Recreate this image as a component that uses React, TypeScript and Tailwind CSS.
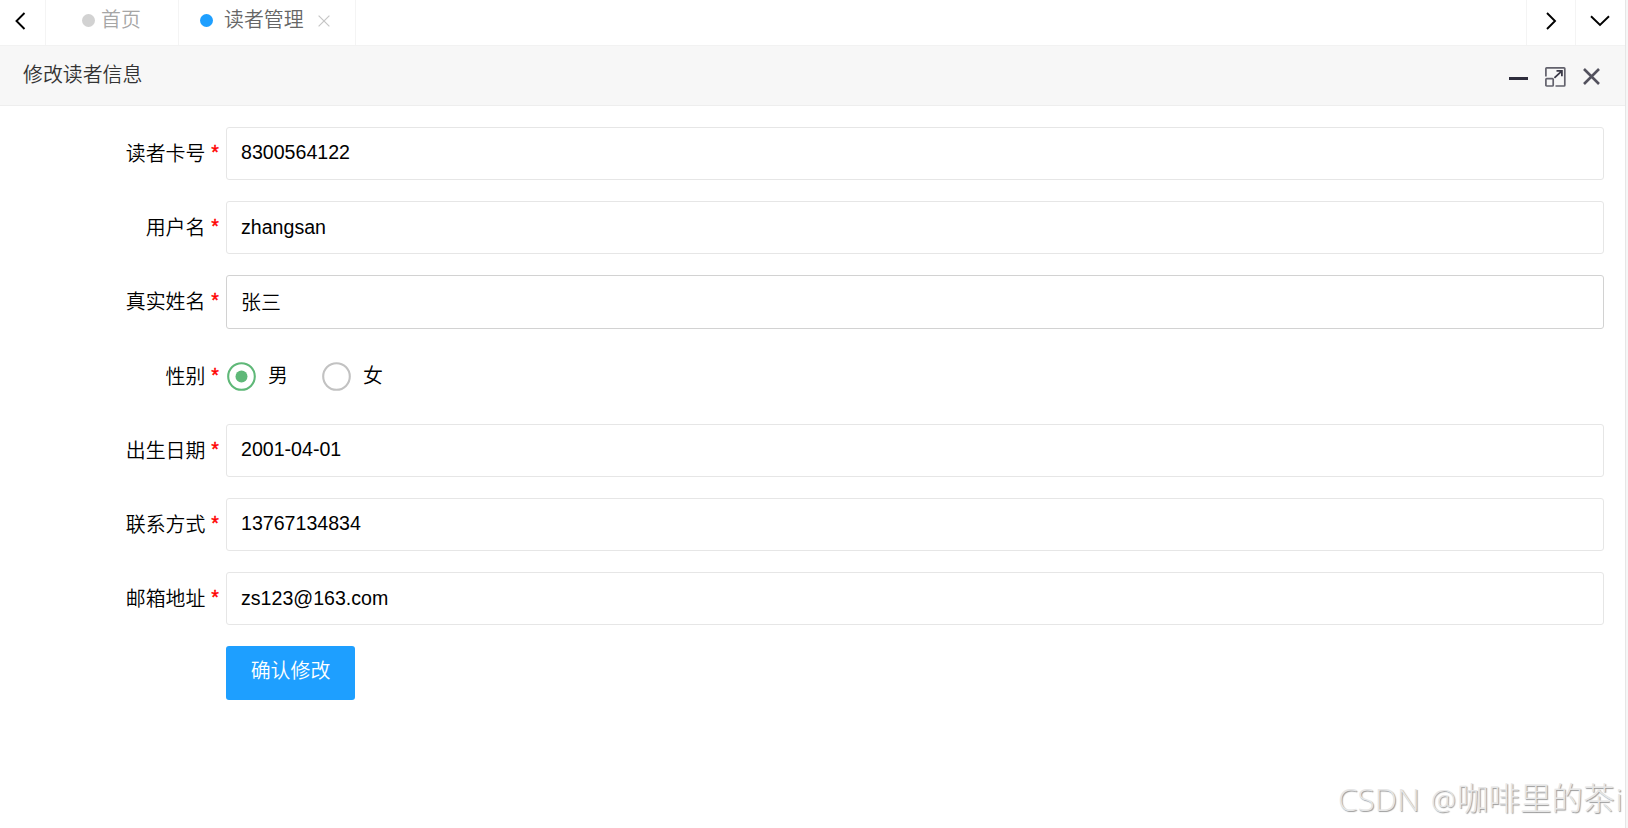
import { useState } from "react";
import type { ReactNode } from "react";

const fields = [
  { label: "读者卡号", name: "readerNumber", value: "8300564122" },
  { label: "用户名", name: "username", value: "zhangsan" },
  { label: "真实姓名", name: "realName", value: "张三", hover: true },
  { label: "性别", name: "sex", value: "男", options: ["男", "女"] },
  { label: "出生日期", name: "birthday", value: "2001-04-01" },
  { label: "联系方式", name: "tel", value: "13767134834" },
  { label: "邮箱地址", name: "email", value: "zs123@163.com" },
];

function TabBar() {
  return (
    <div className="flex h-[46px] shrink-0 border-b border-[#f2f2f2] bg-white leading-[41px]">
      <button className="flex w-[46px] items-center justify-center border-r border-[#f4f4f4] pr-1 pb-1">
        <svg width="12" height="18" viewBox="0 0 12 18" fill="none" stroke="#000" strokeWidth="1.9">
          <path d="M9.5 1 L1.5 9 L9.5 17" />
        </svg>
      </button>
      <div className="flex w-[133px] border-r border-[#f4f4f4] pl-9 text-[#a6a6a6]">
        <span className="mt-[14px] mr-[6px] h-[13px] w-[13px] rounded-full bg-[#d2d2d2]" />
        <span>首页</span>
      </div>
      <div className="flex w-[177px] border-r border-[#f4f4f4] pl-[21px] text-[#666]">
        <span className="mt-[14px] mr-[11px] h-[13px] w-[13px] rounded-full bg-[#1e9fff]" />
        <span>读者管理</span>
        <svg className="mt-[15px] ml-[14px]" width="12" height="12" viewBox="0 0 12 12" stroke="#c6c6c6" strokeWidth="1.2">
          <path d="M0.6 0.6 L11.4 11.4 M11.4 0.6 L0.6 11.4" />
        </svg>
      </div>
      <div className="flex-1" />
      <button className="flex w-[49px] items-center justify-center border-l border-[#f4f4f4] pb-1">
        <svg width="12" height="18" viewBox="0 0 12 18" fill="none" stroke="#000" strokeWidth="1.9">
          <path d="M2 1 L10 9 L2 17" />
        </svg>
      </button>
      <button className="flex w-[50px] items-center justify-center border-l border-[#f4f4f4] pr-px pb-1">
        <svg width="20" height="12" viewBox="0 0 20 12" fill="none" stroke="#000" strokeWidth="1.9">
          <path d="M1 1.2 L10 10 L19 1.2" />
        </svg>
      </button>
    </div>
  );
}

function TitleBar() {
  return (
    <div className="flex h-[60px] shrink-0 border-b border-[#eee] bg-[#f7f7f7] pl-[23px] text-[#333]">
      <span className="flex-1 leading-[58px]">修改读者信息</span>
      <div className="flex pr-[25px]">
        <span className="mt-[31px] mr-[17px] h-[3px] w-[19px] bg-[#2e2d3c]" />
        <svg className="mt-[21px] mr-[17px]" width="21" height="20" viewBox="0 0 21 20" fill="none" stroke="#62616c" strokeWidth="1.7">
          <path d="M0.9 9.5 V1.6 Q0.9 0.9 1.6 0.9 H19 Q19.8 0.9 19.8 1.6 V18.2 Q19.8 19 19 19 H10.5" />
          <rect x="0.9" y="11.7" width="7.3" height="7.3" rx="0.8" />
          <path d="M9.4 10.8 L17 3.8 M11.5 3.9 H16.9 V9.2" stroke="#3b3a48" strokeWidth="1.8" />
        </svg>
        <svg className="mt-[22px]" width="17" height="17" viewBox="0 0 17 17" stroke="#53525e" strokeWidth="2.6">
          <path d="M1 1 L16 16 M16 1 L1 16" />
        </svg>
      </div>
    </div>
  );
}

function FormRow({ label, children }: { label: string; children: ReactNode }) {
  return (
    <div className="mb-[21px] flex h-[53.2px]">
      <label className="flex w-[226px] shrink-0 justify-end pr-[7px] leading-[54px]">
        {label}
        <span className="ml-[6px] font-['Liberation_Sans'] text-[19.6px] leading-[50px] font-normal text-[#ff0000] [-webkit-text-stroke:0.4px_#ff0000]">
          *
        </span>
      </label>
      {children}
    </div>
  );
}

function Radio({ label, checked, onSelect }: { label: string; checked: boolean; onSelect: () => void }) {
  return (
    <button type="button" onClick={onSelect} className="mr-[33px] flex items-center leading-[50px]">
      <svg className="mr-3 ml-px" width="29" height="29" viewBox="0 0 29 29" fill="none">
        <circle cx="14.5" cy="14.5" r="13.3" stroke={checked ? "#5fb878" : "#c2c2c2"} strokeWidth="2.1" />
        {checked && <circle cx="14.5" cy="14.5" r="6" fill="#5fb878" />}
      </svg>
      {label}
    </button>
  );
}

export default function App() {
  const [sex, setSex] = useState("男");

  return (
    <div className="relative flex h-[828px] w-[1628px] overflow-hidden bg-white font-['Liberation_Sans','Noto_Sans_CJK_SC',sans-serif] text-[19.9px] font-[350] text-black">
      <div className="flex min-w-0 flex-1 flex-col">
        <TabBar />
        <TitleBar />

        <form className="flex-1 pt-[21px] pr-[21px]">
          {fields.map((field) => (
            <FormRow key={field.name} label={field.label}>
              {field.options ? (
                field.options.map((option) => (
                  <Radio key={option} label={option} checked={sex === option} onSelect={() => setSex(option)} />
                ))
              ) : (
                <input
                  name={field.name}
                  defaultValue={field.value}
                  className={`min-w-0 flex-1 rounded-[3px] border px-[14px] outline-none ${
                    field.hover ? "border-[#d2d2d2] pt-[3px]" : "border-[#e6e6e6] pb-[1px] text-[19.6px]"
                  }`}
                />
              )}
            </FormRow>
          ))}
          <button
            type="button"
            className="ml-[226px] h-[53.2px] w-[129px] rounded-[3px] bg-[#1e9fff] pb-[2px] text-white"
          >
            确认修改
          </button>
        </form>
      </div>
      <div className="w-[3px] border-l border-[#e6e6e6] bg-[#f6f6f6]" />

      {/* Watermark */}
      <div className="pointer-events-none absolute top-[775px] left-[1338px] flex text-[31.5px] leading-[48px] font-light whitespace-nowrap text-[#e6e6e6] [text-shadow:1px_1px_1px_#999]">
        <span className="w-[93px] font-['Open_Sans']">CSDN</span>
        <span className="w-[26px] font-['Open_Sans'] text-[28px]">@</span>
        <span>咖啡里的茶</span>
        <span className="ml-px font-['Open_Sans']">i</span>
      </div>
    </div>
  );
}
